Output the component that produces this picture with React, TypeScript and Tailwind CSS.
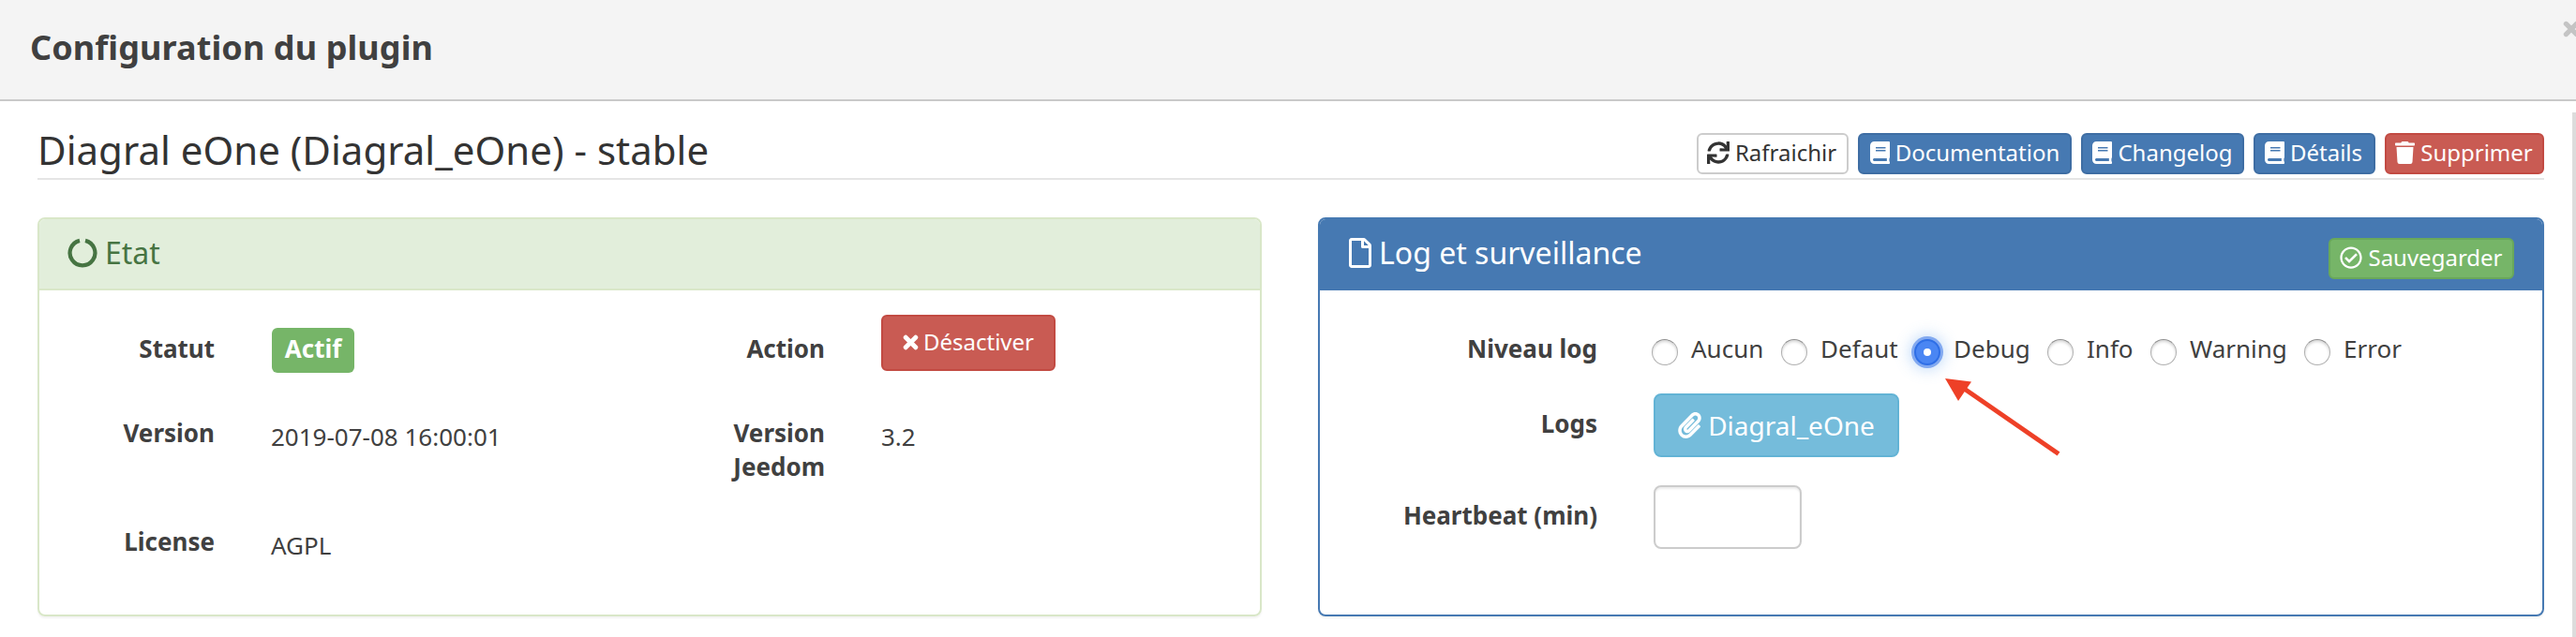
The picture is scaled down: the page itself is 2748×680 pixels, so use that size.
import React from "react";
import { FaBook, FaPaperclip, FaRegCheckCircle, FaRegFile, FaSync, FaTrash } from "react-icons/fa";

const toolbar = [
  { label: "Rafraichir", icon: FaSync, size: "w-6", box: "w-[162px] border-[#cccccc] bg-white pr-0.5 text-[#333333]" },
  { label: "Documentation", icon: FaBook, size: "w-[21px]", box: "w-[228px] border-[#3e6da3] bg-[#4679b2] text-white" },
  { label: "Changelog", icon: FaBook, size: "w-[21px]", box: "w-[174px] border-[#3e6da3] bg-[#4679b2] text-white" },
  { label: "Détails", icon: FaBook, size: "w-[21px]", box: "w-[130px] border-[#3e6da3] bg-[#4679b2] pr-0.5 text-white" },
  { label: "Supprimer", icon: FaTrash, size: "w-[21px]", box: "w-[170px] border-[#c24a42] bg-[#c95b53] pr-px text-white" },
];

const levels = [
  { label: "Aucun", width: "w-[138px]", checked: false },
  { label: "Defaut", width: "w-[142px]", checked: false },
  { label: "Debug", width: "w-[142px]", checked: true },
  { label: "Info", width: "w-[110px]", checked: false },
  { label: "Warning", width: "w-[164px]", checked: false },
  { label: "Error", width: "w-[110px]", checked: false },
];

function Cross({ className }: { className: string }) {
  return (
    <svg viewBox="0 0 18 18" className={"shrink-0 " + className}>
      <path d="M3.4 3.4 L14.6 14.6 M14.6 3.4 L3.4 14.6" stroke="currentColor" strokeWidth="5.2" strokeLinecap="round" />
    </svg>
  );
}

function Ring({ className }: { className: string }) {
  return (
    <svg viewBox="0 0 32 32" className={className} fill="none">
      <path d="M13 2.9 A13.4 13.4 0 1 0 19 2.9" stroke="currentColor" strokeWidth="4.2" />
    </svg>
  );
}

function Radio({ checked }: { checked: boolean }) {
  return checked ? (
    <span className="mt-2 flex size-7 shrink-0 items-center justify-center rounded-full border-2 border-[#2f6fe6] bg-[#4a86f3] shadow-[0_0_0_3px_#82a9f0,0_0_16px_4px_rgba(110,170,240,0.45)]">
      <span className="size-2 rounded-full bg-white" />
    </span>
  ) : (
    <span className="mt-2 size-7 shrink-0 rounded-full border border-[#b0b0b0] border-t-[#8f8f8f] bg-white shadow-[inset_0_2px_3px_rgba(0,0,0,0.16)]" />
  );
}

function Label({ children, className }: { children: React.ReactNode; className: string }) {
  return <div className={"text-right font-bold " + className}>{children}</div>;
}

export default function App() {
  return (
    <div className="relative h-[680px] w-[2748px] overflow-hidden bg-white font-['Noto_Sans',sans-serif] text-[26px] leading-[36px] text-[#404040]">
      <header className="flex h-[108px] justify-between overflow-hidden border-b-2 border-[#c9c9c9] bg-[#f4f4f4] pl-8">
        <h1 className="pt-[26px] text-[36px] leading-[50px] font-bold tracking-[0.1px]">Configuration du plugin</h1>
        <Cross className="mt-[22px] -mr-1 size-[18px] text-[#c4c4c4]" />
      </header>

      <div className="flex">
        <main className="w-[2744px] pr-[30px] pl-10">
          <div className="flex h-[84px] justify-between border-b-2 border-[#e5e5e5]">
            <h2 className="pt-[27px] text-[42px] leading-[50px] text-[#333333]">
              Diagral eOne (Diagral_eOne) - stable
            </h2>
            <div className="flex gap-2.5 pt-[34px] text-[24px]">
              {toolbar.map(({ label, icon: Icon, size, box }) => (
                <button
                  key={label}
                  className={"flex h-11 items-center justify-center gap-1.5 rounded-md border-2 pb-0.5 whitespace-nowrap " + box}
                >
                  <Icon className={"h-6 shrink-0 " + size} />
                  {label}
                </button>
              ))}
            </div>
          </div>

          <div className="flex gap-[60px] pt-10">
            <section className="h-[426px] w-[1306px] overflow-hidden rounded-lg border-2 border-[#d9e7c8] shadow-[0_2px_2px_rgba(0,0,0,0.05)]">
              <div className="flex h-[76px] gap-2 border-b-2 border-[#d9e7c8] bg-[#e2eedb] pl-[30px] text-[32px] text-[#467442]">
                <Ring className="mt-5 size-8" />
                <h3 className="pt-4 leading-[40px]">Etat</h3>
              </div>
              <div className="grid grid-cols-[187px_470px_181px_300px] grid-rows-[134px_116px_96px]">
                <Label className="pt-11">Statut</Label>
                <div className="pt-10 pl-[61px]">
                  <span className="flex h-12 w-[88px] justify-center rounded-md bg-[#76b568] leading-[44px] font-bold text-white">
                    Actif
                  </span>
                </div>
                <Label className="pt-11">Action</Label>
                <div className="pt-[26px] pl-[60px]">
                  <button className="flex h-[60px] w-[186px] items-center justify-center gap-[5px] rounded-md border-2 border-[#c24a42] bg-[#c95b53] pb-0.5 text-[24px] text-white">
                    <Cross className="size-[17px]" />
                    Désactiver
                  </button>
                </div>
                <Label className="">Version</Label>
                <div className="pt-1 pl-[60px]">2019-07-08 16:00:01</div>
                <Label className="pl-[50px]">Version Jeedom</Label>
                <div className="pt-1 pl-[60px]">3.2</div>
                <Label className="">License</Label>
                <div className="pt-1 pl-[60px]">AGPL</div>
              </div>
            </section>

            <section className="h-[426px] w-[1308px] overflow-hidden rounded-lg border-2 border-[#4679b2] shadow-[0_2px_2px_rgba(0,0,0,0.05)]">
              <div className="flex h-[76px] justify-between bg-[#4679b2] pr-[30px] pl-[31px] text-white">
                <div className="flex gap-2 text-[32px]">
                  <FaRegFile className="mt-5 h-8 w-6" />
                  <h3 className="pt-4 leading-[40px]">Log et surveillance</h3>
                </div>
                <button className="mt-5 flex h-11 w-[198px] items-center justify-center gap-1.5 rounded-md border-2 border-[#69a85a] bg-[#76b568] pb-0.5 text-[24px]">
                  <FaRegCheckCircle className="size-6" />
                  Sauvegarder
                </button>
              </div>
              <div className="grid grid-cols-[296px_950px] grid-rows-[110px_98px_100px]">
                <Label className="pt-11">Niveau log</Label>
                <div className="flex pt-11 pl-[58px]">
                  {levels.map(({ label, width, checked }) => (
                    <label key={label} className={"flex shrink-0 gap-3.5 " + width}>
                      <Radio checked={checked} />
                      {label}
                    </label>
                  ))}
                </div>
                <Label className="pt-3.5">Logs</Label>
                <div className="pl-[60px]">
                  <button className="flex h-[68px] w-[262px] items-center justify-center gap-[7px] rounded-lg border-2 border-[#62b3d5] bg-[#75bcdb] pb-px text-[28px] text-white">
                    <FaPaperclip className="h-7 w-[25px]" />
                    Diagral_eOne
                  </button>
                </div>
                <Label className="pt-3.5">Heartbeat (min)</Label>
                <div className="pl-[60px]">
                  <input className="h-[68px] w-[158px] rounded-lg border-2 border-[#cccccc] bg-white shadow-[inset_0_2px_2px_rgba(0,0,0,0.075)]" />
                </div>
              </div>
            </section>
          </div>
        </main>
        <div className="mt-3 h-[560px] w-1 bg-[#dcdcdc]" />
      </div>

      <svg className="absolute top-[400px] left-[2070px]" width="132" height="92" viewBox="0 0 132 92">
        <path d="M24 14 L126 84.5" stroke="#ee4027" strokeWidth="5" />
        <path d="M5 4 L33 7.5 L19 28 Z" fill="#ee4027" />
      </svg>
    </div>
  );
}
